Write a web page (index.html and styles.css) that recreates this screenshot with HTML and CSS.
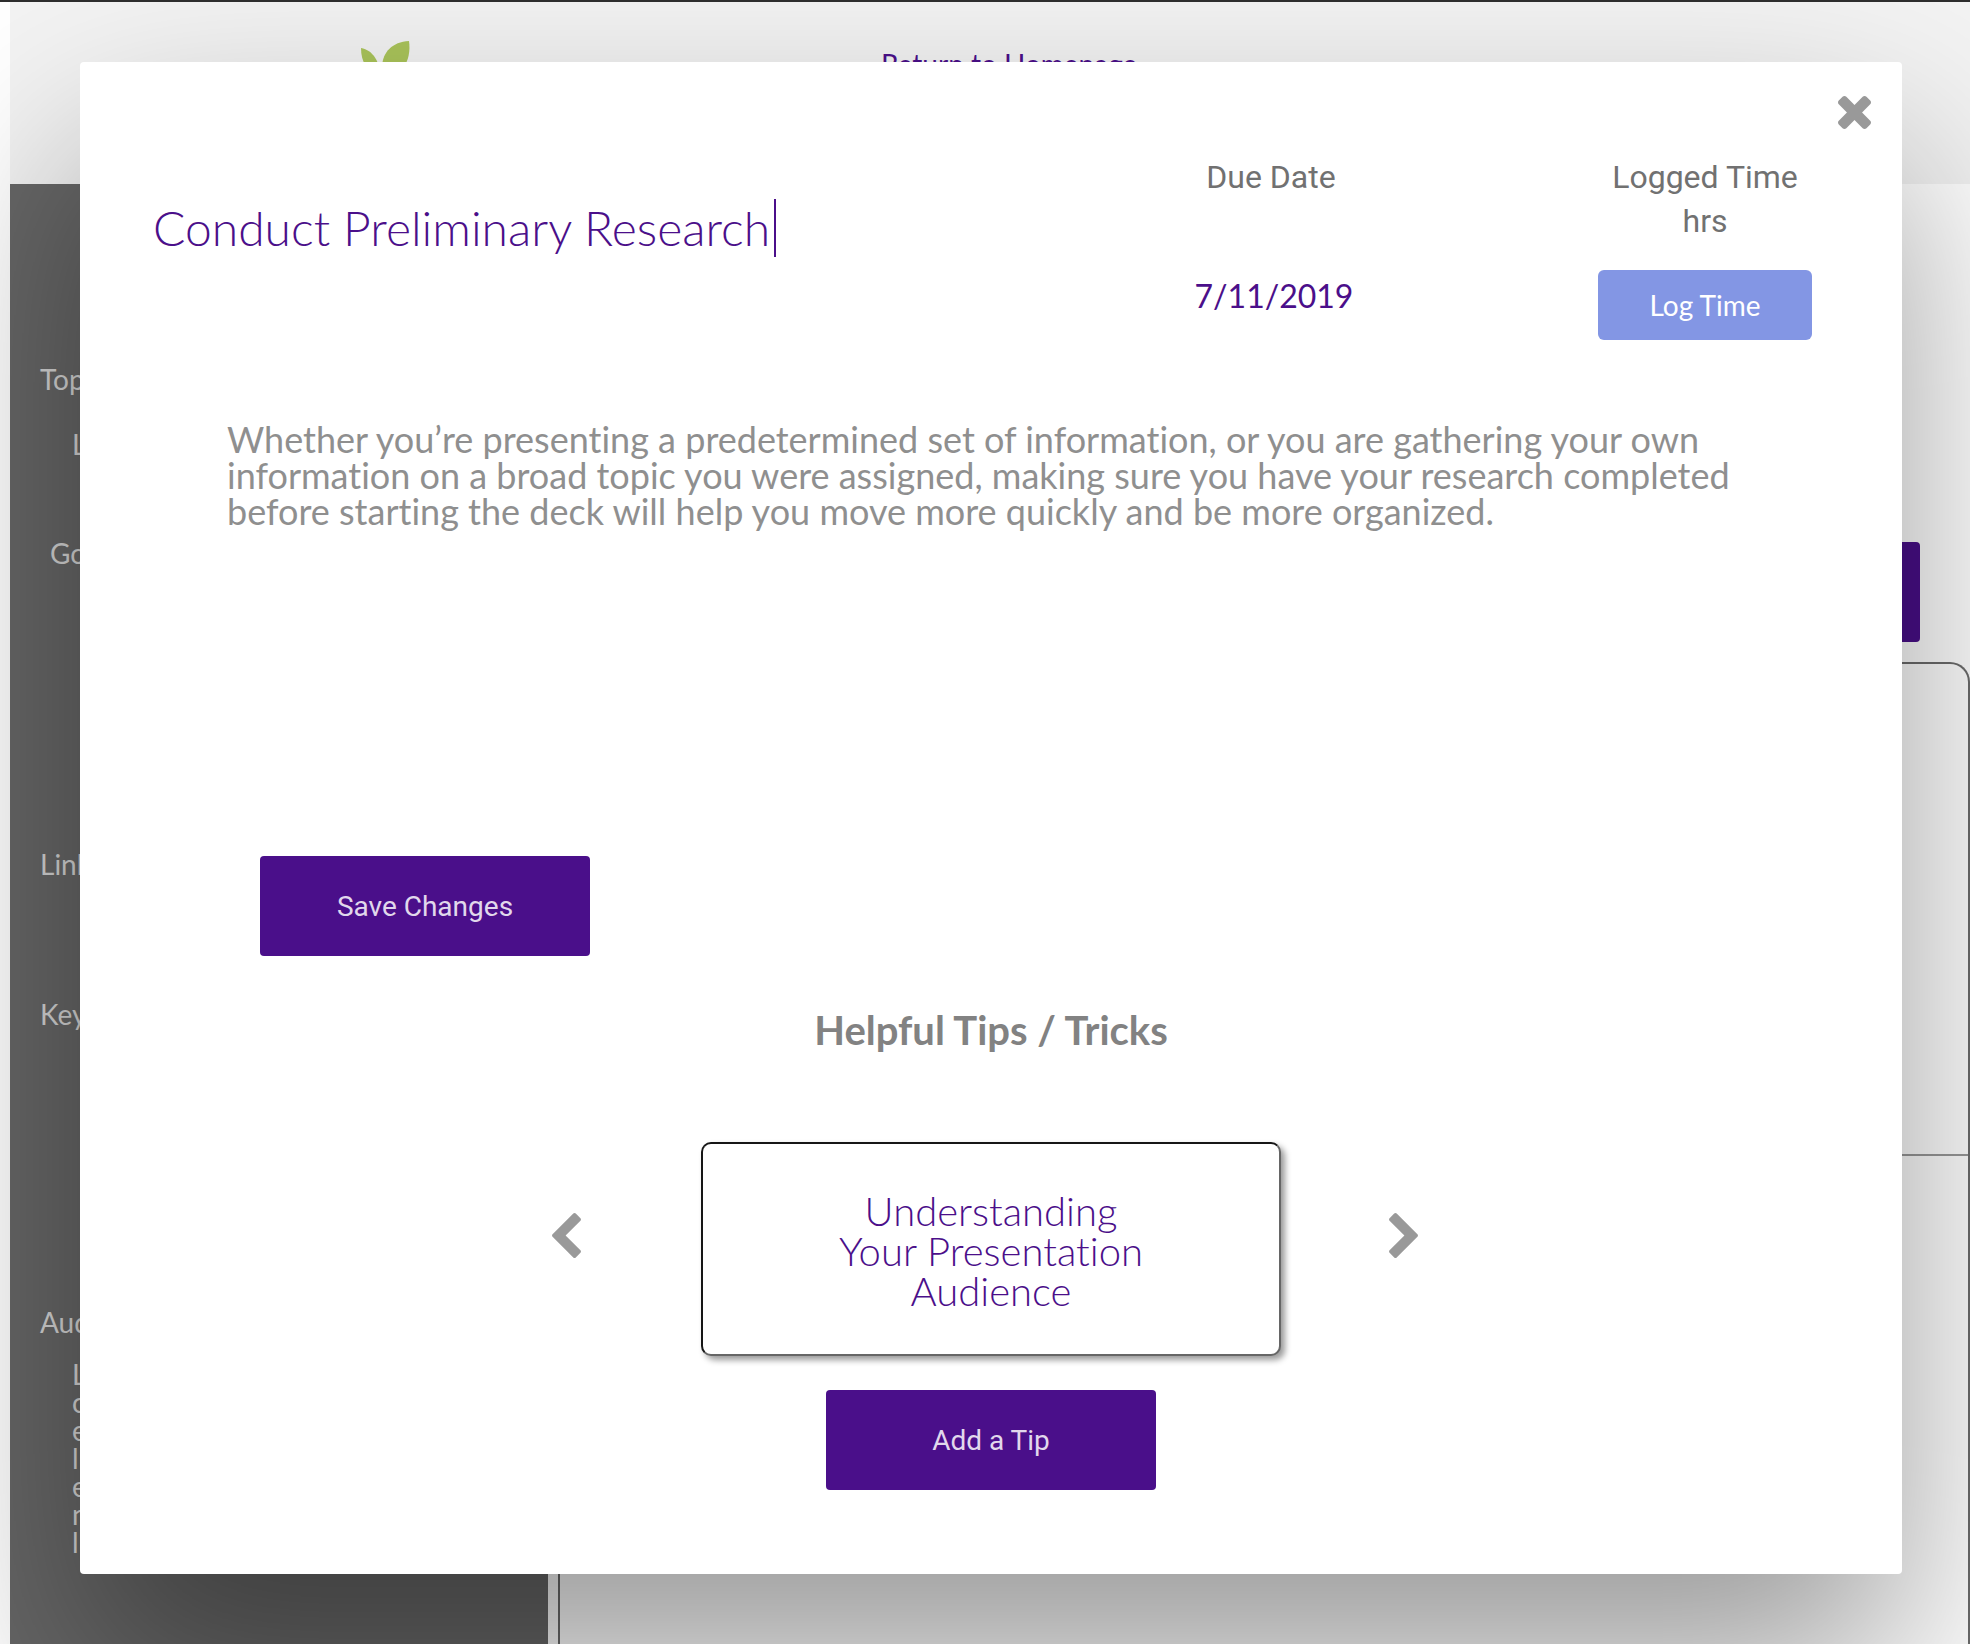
FILE: index.html
```html
<!DOCTYPE html>
<html lang="en">
<head>
<meta charset="utf-8">
<meta name="viewport" content="width=device-width, initial-scale=1">
<title>Conduct Preliminary Research</title>
<link rel="stylesheet" href="styles.css">
</head>
<body>
<div class="page">
  <header class="topbar">
    <svg class="logo" viewBox="0 0 64 48" width="64" height="48" aria-hidden="true">
      <path d="M61 1C44 2 35 12 34 26C34 34 35 40 37 44C52 36 64 22 61 1Z" fill="#aac45a"/>
      <path d="M13 8C13 22 19 32 33 38C32 22 25 10 13 8Z" fill="#aac45a"/>
    </svg>
    <a class="home" href="#">Return to Homepage</a>
  </header>
  <div class="columns">
    <aside class="sidebar">
      <h2 class="label">Topic</h2>
      <p class="value topic">L</p>
      <h2 class="label goal">Goal</h2>
      <h2 class="label links">Link</h2>
      <h2 class="label key">Key</h2>
      <h2 class="label audience">Aud</h2>
      <p class="value">L<br>o<br>e<br>l<br>e<br>n<br>l</p>
    </aside>
    <main class="board">
      <button class="primary board-action" type="button" aria-label="Add a task"></button>
      <section class="panel"><div class="panel-row"></div></section>
    </main>
  </div>
</div>

<div class="overlay">
  <form class="modal" role="dialog" aria-label="Task details">
    <button class="icon close" type="button" aria-label="Close">
      <svg viewBox="302 366 1224 1224" width="34" height="34"><path d="M1490 1322q0 40-28 68l-136 136q-28 28-68 28t-68-28l-294-294-294 294q-28 28-68 28t-68-28l-136-136q-28-28-28-68t28-68l294-294-294-294q-28-28-28-68t28-68l136-136q28-28 68-28t68 28l294 294 294-294q28-28 68-28t68 28l136 136q28 28 28 68t-28 68l-294 294 294 294q28 28 28 68z"/></svg>
    </button>
    <div class="head">
      <div class="title-box">
        <input class="title" type="text" aria-label="Task title" size="26" value="Conduct Preliminary Research"><span class="caret"></span>
      </div>
      <div class="meta">
        <label class="meta-label" for="due">Due Date</label>
        <input class="date" id="due" type="text" value="7/11/2019">
      </div>
      <div class="meta">
        <p class="meta-label">Logged Time<br>hrs</p>
        <button class="log" type="button">Log Time</button>
      </div>
    </div>
    <textarea class="description" aria-label="Description">Whether you’re presenting a predetermined set of information, or you are gathering your own information on a broad topic you were assigned, making sure you have your research completed before starting the deck will help you move more quickly and be more organized.</textarea>
    <button class="primary save" type="button">Save Changes</button>
    <h2 class="tips-title">Helpful Tips / Tricks</h2>
    <div class="carousel">
      <button class="icon previous" type="button" aria-label="Previous tip">
        <svg viewBox="410 26 1036 1612" width="29" height="45"><path d="M1427 301L896 832l531 531q19 19 19 45t-19 45l-166 166q-19 19-45 19t-45-19L429 877q-19-19-19-45t19-45L1171 45q19-19 45-19t45 19l166 166q19 19 19 45t-19 45z"/></svg>
      </button>
      <button class="tip" type="button">Understanding<br>Your Presentation<br>Audience</button>
      <button class="icon next" type="button" aria-label="Next tip">
        <svg viewBox="346 26 1036 1612" width="29" height="45"><path d="M1363 877l-742 742q-19 19-45 19t-45-19l-166-166q-19-19-19-45t19-45l531-531-531-531q-19-19-19-45t19-45L531 45q19-19 45-19t45 19l742 742q19 19 19 45t-19 45z"/></svg>
      </button>
    </div>
    <button class="primary add" type="button">Add a Tip</button>
  </form>
</div>
</body>
</html>
```
FILE: styles.css
```css
* { box-sizing: border-box; }

body {
  margin: 0;
  background: #fff;
  font-family: Lato, "Liberation Sans", sans-serif;
  font-variant-ligatures: none;
}

h2, p { margin: 0; font-weight: 400; }

button, input, textarea {
  margin: 0;
  border: 0;
  font: inherit;
  font-variant-ligatures: none;
}

/* Page behind the dialog */
.page {
  display: flex;
  flex-direction: column;
  height: 100vh;
  padding-left: 10px;
  border-top: 2px solid #2e2e2e;
  overflow: hidden;
}

.topbar {
  display: flex;
  flex: none;
  height: 182px;
  padding: 38px 0 0 348px;
  background: #f3f3f3;
}

.logo { margin-left: -10px; }

.home {
  margin: 6px 0 0 469px;
  color: #4b0f8a;
  font-size: 28px;
  line-height: 36px;
  text-decoration: none;
}

.columns { display: flex; flex: 1; gap: 10px; min-height: 0; }

.sidebar {
  flex: none;
  width: 538px;
  padding: 181px 30px 0;
  background: #676767;
  color: #d6d6d6;
  font-size: 28px;
  line-height: 28px;
}

.label { font-size: 28px; }
.value { padding-left: 32px; }
.topic { margin-top: 37px; }
.goal { margin-top: 81px; padding-left: 10px; }
.links { margin-top: 283px; }
.key { margin-top: 122px; }
.audience { margin: 280px 0 24px; }

.board { display: flex; flex: 1; flex-direction: column; padding-top: 358px; }

.board-action { align-self: flex-end; margin: 0 50px 20px 0; }

.panel { flex: 1; border: 2px solid #6c6c6c; border-bottom: 0; border-radius: 20px 20px 0 0; }
.panel-row { height: 492px; border-bottom: 2px solid #999; }

/* Dialog */
.overlay {
  position: absolute;
  inset: 0;
  padding: 62px 68px 70px 80px;
  overflow: hidden;
}

.modal {
  display: flex;
  flex-direction: column;
  padding: 34px 30px 84px;
  border-radius: 4px;
  background: #fff;
  box-shadow: 0 100px 200px rgba(0, 0, 0, .4);
}

.icon { display: block; flex: none; padding: 0; background: none; }
.icon svg { display: block; fill: #999; }
.close { align-self: flex-end; }

.head {
  display: grid;
  grid-template-columns: 1fr 224px 214px;
  column-gap: 215px;
  padding: 25px 60px 0 43px;
}

.title-box { display: flex; align-items: center; gap: 4px; height: 58px; margin-top: 44px; }

.title {
  field-sizing: content;
  padding: 0;
  background: none;
  color: #4b0f8a;
  font-size: 48px;
  font-weight: 300;
  line-height: 58px;
}

.caret { width: 2px; height: 58px; background: #4b0f8a; }

.meta { display: flex; flex-direction: column; align-items: center; }

.meta-label {
  color: #717171;
  font-family: Roboto, sans-serif;
  font-size: 32px;
  line-height: 44px;
  text-align: center;
}

.date {
  width: 100%;
  margin-top: 77px;
  padding: 0 0 0 6px;
  background: none;
  color: #4b0f8a;
  font-size: 32px;
  line-height: 40px;
  text-align: center;
}

.log {
  width: 100%;
  height: 70px;
  margin-top: 27px;
  border-radius: 6px;
  background: #8396e4;
  color: #fff;
  font-size: 28px;
}

.description {
  height: 420px;
  margin: 81px 90px 0 117px;
  padding: 0;
  background: none;
  color: #8f8f8f;
  font-size: 36px;
  line-height: 36px;
  resize: none;
}

.primary {
  width: 330px;
  height: 100px;
  border-radius: 4px;
  background: #4a0f8a;
  color: #e1d8ec;
  font-family: Roboto, sans-serif;
  font-size: 28px;
}

.save { margin: 15px 0 0 150px; }

.tips-title {
  margin-top: 50px;
  color: #828282;
  font-size: 40px;
  font-weight: 700;
  line-height: 48px;
  text-align: center;
}

.carousel {
  display: grid;
  grid-template-columns: 1fr auto 1fr;
  align-items: center;
  margin-top: 88px;
}

.previous { justify-self: end; margin: 0 120px 28px 0; }
.next { justify-self: start; margin: 0 0 28px 108px; }

.tip {
  width: 580px;
  height: 214px;
  padding: 4px 0 0;
  border: 2px solid;
  border-color: #161616 #666 #666 #161616;
  border-radius: 10px;
  background: #fff;
  box-shadow: 4px 4px 6px rgba(0, 0, 0, .4);
  color: #4b0f8a;
  font-size: 40px;
  font-weight: 300;
  line-height: 40px;
}

.add { align-self: center; margin-top: 34px; }
```
